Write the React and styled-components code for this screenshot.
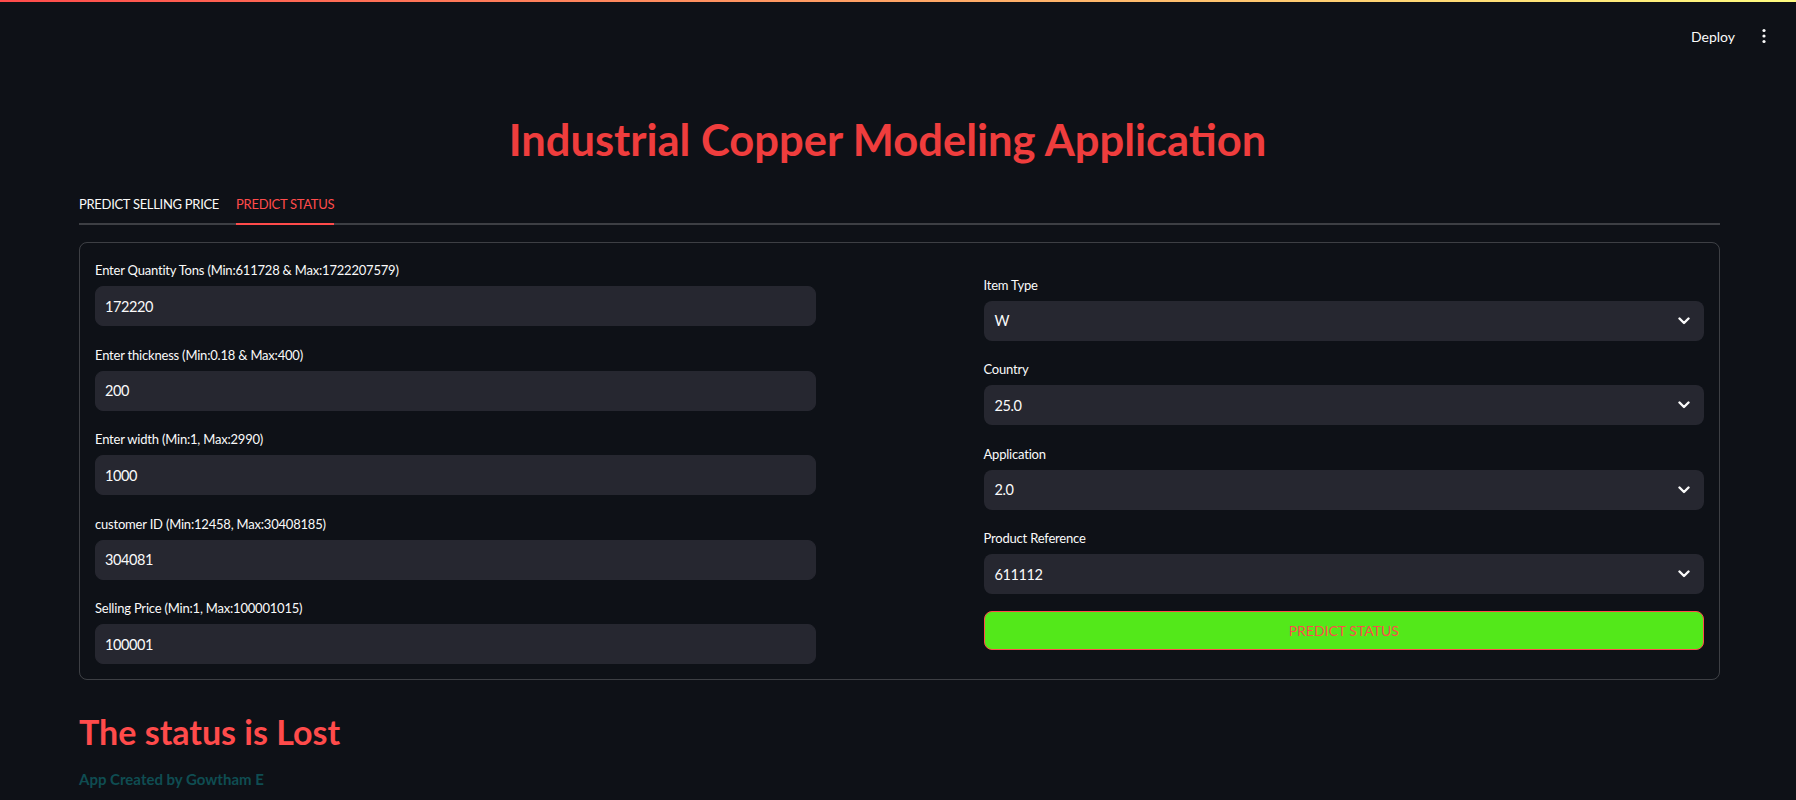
import styled, { createGlobalStyle } from "styled-components";

const GlobalStyle = createGlobalStyle`
  body {
    margin: 0;
    background: #0e1117;
    color: #fafafa;
    font-family: Lato, "Noto Sans", sans-serif;
  }
  * { box-sizing: border-box; }
`;

const leftFields = [
  { label: "Enter Quantity Tons (Min:611728 & Max:1722207579)", value: "172220" },
  { label: "Enter thickness (Min:0.18 & Max:400)", value: "200" },
  { label: "Enter width (Min:1, Max:2990)", value: "1000" },
  { label: "customer ID (Min:12458, Max:30408185)", value: "304081" },
  { label: "Selling Price (Min:1, Max:100001015)", value: "100001" },
];

const rightFields = [
  { label: "Item Type", value: "W" },
  { label: "Country", value: "25.0" },
  { label: "Application", value: "2.0" },
  { label: "Product Reference", value: "611112" },
];

const App = () => {
  return (
    <>
      <GlobalStyle />
      <TopBar />
      <Header>
        <DeployButton>Deploy</DeployButton>
        <MenuButton>
          <svg width="16" height="16" viewBox="0 0 16 16" fill="#fafafa">
            <circle cx="8" cy="2.5" r="1.6" />
            <circle cx="8" cy="8" r="1.6" />
            <circle cx="8" cy="13.5" r="1.6" />
          </svg>
        </MenuButton>
      </Header>
      <Main>
        <Title>Industrial Copper Modeling Application</Title>
        <TabList>
          <Tab>PREDICT SELLING PRICE</Tab>
          <Tab $active>PREDICT STATUS</Tab>
        </TabList>
        <Panel>
          <Columns>
            <Column>
              {leftFields.map((f) => (
                <Field key={f.label}>
                  <Label>{f.label}</Label>
                  <TextInput defaultValue={f.value} />
                </Field>
              ))}
            </Column>
            <Column>
              {rightFields.map((f) => (
                <Field key={f.label}>
                  <Label>{f.label}</Label>
                  <Select>
                    <span>{f.value}</span>
                    <svg width="12" height="8" viewBox="0 0 12 8" fill="none">
                      <path d="M1.5 1.5 L6 6 L10.5 1.5" stroke="#fafafa" strokeWidth="2.4" strokeLinecap="round" strokeLinejoin="round" />
                    </svg>
                  </Select>
                </Field>
              ))}
              <PredictButton>PREDICT STATUS</PredictButton>
            </Column>
          </Columns>
        </Panel>
        <Status>The status is Lost</Status>
        <Footer>App Created by Gowtham E</Footer>
      </Main>
    </>
  );
};

export default App;

const TopBar = styled.div`
  height: 2px;
  background: linear-gradient(90deg, #ff4b4b, #fffd80);
`;

const Header = styled.header`
  height: 68px;
  display: flex;
  align-items: center;
  justify-content: flex-end;
  gap: 21px;
  padding-right: 24px;
`;

const DeployButton = styled.span`
  font-size: 14px;
  color: #fafafa;
  cursor: pointer;
`;

const MenuButton = styled.span`
  display: flex;
  align-items: center;
`;

const Main = styled.main`
  padding: 0 76px 0 79px;
`;

const Title = styled.h1`
  margin: 43px 0 0;
  padding-right: 24px;
  text-align: center;
  font-size: 43.5px;
  line-height: 1.2;
  font-weight: 700;
  color: #ef3d3d;
`;

const TabList = styled.div`
  margin-top: 30px;
  display: flex;
  gap: 17px;
  border-bottom: 2px solid rgba(250, 250, 250, 0.2);
`;

const Tab = styled.div`
  font-size: 13px;
  letter-spacing: -0.3px;
  line-height: 17px;
  padding: 1px 0 10px;
  margin-bottom: -2px;
  color: ${(p) => (p.$active ? "#ff4b4b" : "#fafafa")};
  border-bottom: 2px solid ${(p) => (p.$active ? "#ff4b4b" : "transparent")};
`;

const Panel = styled.section`
  margin-top: 17px;
  border: 1px solid rgba(250, 250, 250, 0.2);
  border-radius: 8px;
  padding: 15px;
`;

const Columns = styled.div`
  display: grid;
  grid-template-columns: 1fr 1fr;
  column-gap: 168px;
  align-items: center;
`;

const Column = styled.div`
  display: flex;
  flex-direction: column;
  gap: 16.5px;
`;

const Field = styled.div`
  display: flex;
  flex-direction: column;
`;

const Label = styled.label`
  min-height: 24px;
  margin-bottom: 4px;
  display: flex;
  align-items: center;
  font-size: 13px;
  letter-spacing: -0.2px;
  color: #fafafa;
`;

const TextInput = styled.input`
  height: 40px;
  width: 100%;
  border: 1px solid #262730;
  border-radius: 8px;
  background: #262730;
  color: #fafafa;
  font-family: inherit;
  font-size: 14.5px;
  letter-spacing: -0.4px;
  padding: 0 9px;
  outline: none;
`;

const Select = styled.div`
  height: 40px;
  border-radius: 8px;
  background: #262730;
  color: #fafafa;
  font-size: 14.5px;
  letter-spacing: -0.4px;
  padding: 0 14px 0 11px;
  display: flex;
  align-items: center;
  justify-content: space-between;
`;

const PredictButton = styled.button`
  height: 39px;
  width: 100%;
  border: 1px solid #ff4b4b;
  border-radius: 8px;
  background: #53e81a;
  color: #ff4b4b;
  font-family: inherit;
  font-size: 14px;
  cursor: pointer;
`;

const Status = styled.h2`
  margin: 32px 0 0;
  font-size: 34px;
  line-height: 1.2;
  font-weight: 700;
  color: #ff4b4b;
`;

const Footer = styled.p`
  margin: 17px 0 0;
  font-size: 15px;
  line-height: 1.2;
  font-weight: 700;
  color: #0f4d52;
`;
